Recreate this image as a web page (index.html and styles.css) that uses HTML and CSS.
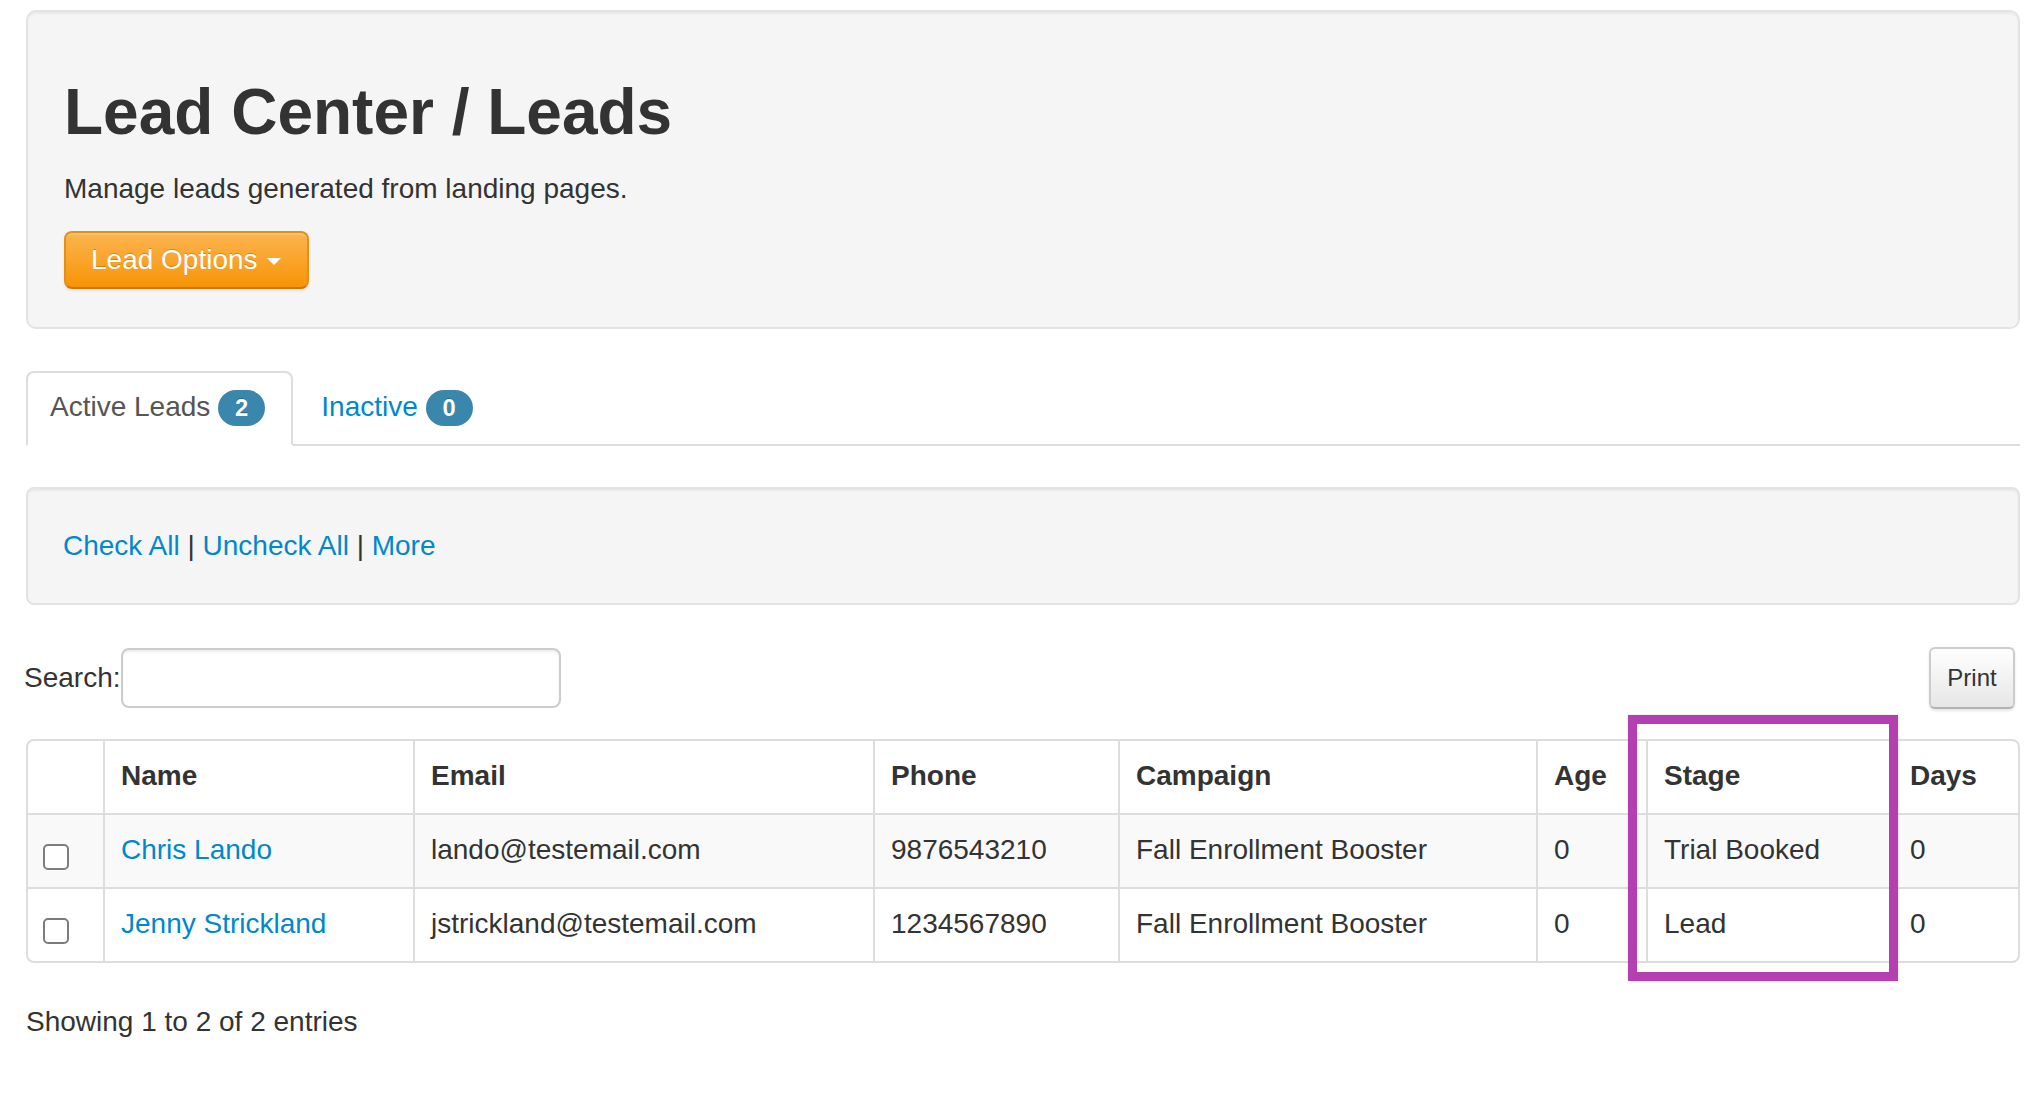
FILE: index.html
```html
<!DOCTYPE html>
<html lang="en">
<head>
    <meta charset="UTF-8">
    <meta name="viewport" content="width=device-width, initial-scale=1.0">
    <title>Lead Center / Leads</title>
    <link rel="stylesheet" href="styles.css">
</head>
<body>
    <div class="page">

        <div class="hero">
            <h1>Lead Center / Leads</h1>
            <p>Manage leads generated from landing pages.</p>
            <button class="btn-warning">Lead Options <span class="caret"></span></button>
        </div>

        <ul class="tabs">
            <li class="active"><a href="#">Active Leads <span class="badge">2</span></a></li>
            <li><a href="#">Inactive <span class="badge">0</span></a></li>
        </ul>

        <div class="well">
            <a href="#">Check All</a> | <a href="#">Uncheck All</a> | <a href="#">More</a>
        </div>

        <div class="toolbar">
            <label for="search" class="search-label">Search:<input type="text" id="search" class="search-input"></label>
            <button class="btn-print">Print</button>
        </div>

        <div class="table-wrap">
            <table class="leads">
                <thead>
                    <tr>
                        <th class="col-check"></th>
                        <th class="col-name">Name</th>
                        <th class="col-email">Email</th>
                        <th class="col-phone">Phone</th>
                        <th class="col-campaign">Campaign</th>
                        <th class="col-age">Age</th>
                        <th class="col-stage">Stage</th>
                        <th class="col-days">Days</th>
                    </tr>
                </thead>
                <tbody>
                    <tr>
                        <td class="check"><input type="checkbox"></td>
                        <td><a href="#">Chris Lando</a></td>
                        <td>lando@testemail.com</td>
                        <td>9876543210</td>
                        <td>Fall Enrollment Booster</td>
                        <td>0</td>
                        <td>Trial Booked</td>
                        <td>0</td>
                    </tr>
                    <tr>
                        <td class="check"><input type="checkbox"></td>
                        <td><a href="#">Jenny Strickland</a></td>
                        <td>jstrickland@testemail.com</td>
                        <td>1234567890</td>
                        <td>Fall Enrollment Booster</td>
                        <td>0</td>
                        <td>Lead</td>
                        <td>0</td>
                    </tr>
                </tbody>
            </table>
            <!-- annotation box drawn over the Stage column -->
            <div class="highlight"></div>
        </div>

        <div class="info">Showing 1 to 2 of 2 entries</div>

    </div>
</body>
</html>
```

FILE: styles.css
```css
body {
    margin: 0;
    background-color: #fff;
    color: #333;
    font-family: "Liberation Sans", Arial, Helvetica, sans-serif;
    font-size: 28px;
    line-height: 40px;
}
a {
    color: #0088cc;
    text-decoration: none;
}
.page {
    width: 1994px;
    margin-left: 26px;
    padding-top: 10px;
}

/* hero */
.hero {
    background-color: #f5f5f5;
    border: 2px solid #e3e3e3;
    border-radius: 10px;
    box-shadow: inset 0 2px 2px rgba(0, 0, 0, 0.05);
    padding: 60px 36px 38px;
}
.hero h1 {
    margin: 0 0 17px;
    font-size: 64px;
    line-height: 80px;
    font-weight: bold;
    color: #333;
}
.hero p {
    margin: 0 0 22px;
}
.btn-warning {
    display: block;
    height: 58px;
    padding: 0 26px 0 25px;
    font-family: inherit;
    font-size: 28px;
    line-height: 40px;
    color: #fff;
    text-shadow: 0 -1px 0 rgba(0, 0, 0, 0.2);
    background-image: linear-gradient(#fbb450, #f89406);
    border: 2px solid #e68f17;
    border-bottom-color: #c9790c;
    border-radius: 8px;
    box-shadow: inset 0 2px 0 rgba(255, 255, 255, 0.2), 0 2px 3px rgba(0, 0, 0, 0.08);
    cursor: pointer;
}
.caret {
    display: inline-block;
    width: 0;
    height: 0;
    margin-left: 2px;
    vertical-align: middle;
    border-top: 7px solid #fff;
    border-left: 7px solid transparent;
    border-right: 7px solid transparent;
}

/* tabs */
.tabs {
    list-style: none;
    display: flex;
    margin: 42px 0 0;
    padding: 0;
    border-bottom: 2px solid #ddd;
}
.tabs li {
    margin-bottom: -2px;
    margin-right: 4px;
}
.tabs a {
    display: block;
    padding: 14px 26px 17px 22px;
    border: 2px solid transparent;
    border-radius: 8px 8px 0 0;
    color: #0088cc;
}
.tabs .active a {
    color: #555;
    background-color: #fff;
    border-color: #ddd #ddd transparent;
}
.badge {
    display: inline-block;
    padding: 4px 17px;
    font-size: 23.7px;
    line-height: 28px;
    font-weight: bold;
    color: #fff;
    text-shadow: 0 -1px 0 rgba(0, 0, 0, 0.25);
    background-color: #3a87ad;
    border-radius: 18px;
}

/* actions well */
.well {
    margin-top: 41px;
    padding: 37px 35px;
    background-color: #f5f5f5;
    border: 2px solid #e3e3e3;
    border-radius: 8px;
    box-shadow: inset 0 2px 2px rgba(0, 0, 0, 0.05);
}

/* search + print */
.toolbar {
    display: flex;
    justify-content: space-between;
    align-items: center;
    margin-top: 42px;
    height: 62px;
}
.search-label {
    display: flex;
    align-items: center;
    margin-left: -2px;
}
.search-input {
    width: 440px;
    height: 60px;
    margin: 0;
    box-sizing: border-box;
    border: 2px solid #ccc;
    border-radius: 8px;
    box-shadow: inset 0 2px 2px rgba(0, 0, 0, 0.075);
    font-family: inherit;
    font-size: 28px;
}
.btn-print {
    width: 86px;
    height: 62px;
    margin-right: 5px;
    padding: 0;
    font-family: inherit;
    font-size: 24px;
    color: #333;
    background-image: linear-gradient(#fff, #e6e6e6);
    border: 2px solid #ccc;
    border-bottom-color: #b3b3b3;
    border-radius: 6px;
    box-shadow: inset 0 2px 0 rgba(255, 255, 255, 0.2), 0 2px 3px rgba(0, 0, 0, 0.1);
}

/* table */
.table-wrap {
    position: relative;
    margin-top: 30px;
}
.leads {
    width: 1994px;
    table-layout: fixed;
    border-collapse: separate;
    border-spacing: 0;
    border: 2px solid #ddd;
    border-radius: 8px;
}
.leads th,
.leads td {
    box-sizing: border-box;
    padding: 15px 16px 17px;
    line-height: 40px;
    text-align: left;
    vertical-align: top;
    border-left: 2px solid #ddd;
    border-top: 2px solid #ddd;
}
.leads th {
    border-top: 0;
    font-weight: bold;
}
.leads th:first-child,
.leads td:first-child {
    border-left: 0;
}
.leads tbody tr:nth-child(odd) td {
    background-color: #f9f9f9;
}
.col-check { width: 75px; }
.col-name { width: 310px; }
.col-email { width: 460px; }
.col-phone { width: 245px; }
.col-campaign { width: 418px; }
.col-age { width: 110px; }
.col-stage { width: 246px; }
.col-days { width: 126px; }

.leads td.check {
    padding-left: 15px;
}
.check input {
    appearance: none;
    -webkit-appearance: none;
    display: block;
    width: 26px;
    height: 26px;
    margin: 14px 0 0;
    box-sizing: border-box;
    background-color: #fff;
    border: 2px solid #7d7d7d;
    border-radius: 5px;
}

.highlight {
    position: absolute;
    left: 1602px;
    top: -24px;
    width: 270px;
    height: 266px;
    box-sizing: border-box;
    border: 9px solid #b53fb1;
    box-shadow: 0 0 2px rgba(0, 0, 0, 0.15);
}

.info {
    margin-top: 39px;
}
```
